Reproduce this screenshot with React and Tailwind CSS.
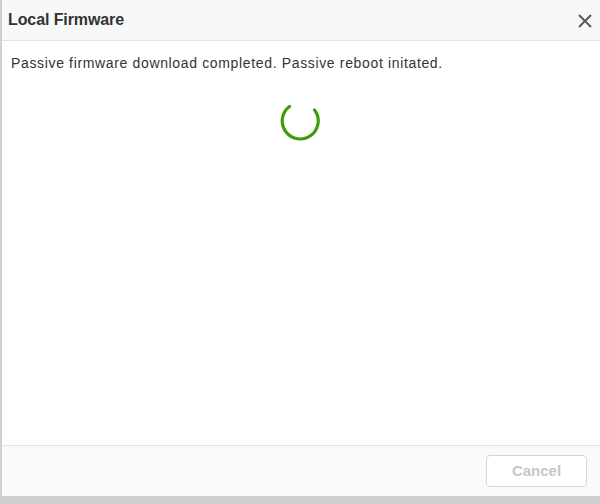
export default function App() {
  return (
    <div className="w-[600px] h-[504px] bg-[#cfcfcf] flex" style={{ fontFamily: '"Liberation Sans", Arial, sans-serif' }}>
      <div className="ml-[2px] w-[598px] h-[496px] bg-white flex flex-col">
        {/* Header */}
        <div className="h-[41px] bg-[#f8f8f8] border-b border-[#e2e2e2] flex items-center justify-between pl-[6px] pr-[5px]">
          <h2 className="text-[16px] font-bold text-[#333] tracking-[-0.1px]">Local Firmware</h2>
          <button className="w-[20px] h-[20px] flex items-center justify-center mt-[1px]" aria-label="Close">
            <svg width="16" height="16" viewBox="0 0 16 16" fill="none" stroke="#5a5a5a" strokeWidth="2">
              <path d="M2 2l12 12M14 2L2 14" />
            </svg>
          </button>
        </div>

        {/* Body */}
        <div className="flex-1 px-[9px] pt-[12px]">
          <p className="text-[14px] tracking-[0.65px] text-[#333]">
            Passive firmware download completed. Passive reboot initated.
          </p>
          <div className="flex justify-center mt-[25px] pr-[4px]">
            <svg width="42" height="42" viewBox="0 0 42 42" fill="none">
              <path
                d="M11.5 7.5A18 18 0 1 0 36.5 11"
                stroke="#3f9d0c"
                strokeWidth="3.2"
                strokeLinecap="round"
              />
            </svg>
          </div>
        </div>

        {/* Footer */}
        <div className="h-[51px] bg-[#fafafa] border-t border-[#e2e2e2] flex items-center justify-end pr-[13px]">
          <button className="w-[101px] h-[32px] border border-[#d6d6d6] rounded-[4px] text-[15px] font-bold text-[#c8c8c8] bg-white">
            Cancel
          </button>
        </div>
      </div>
    </div>
  );
}
